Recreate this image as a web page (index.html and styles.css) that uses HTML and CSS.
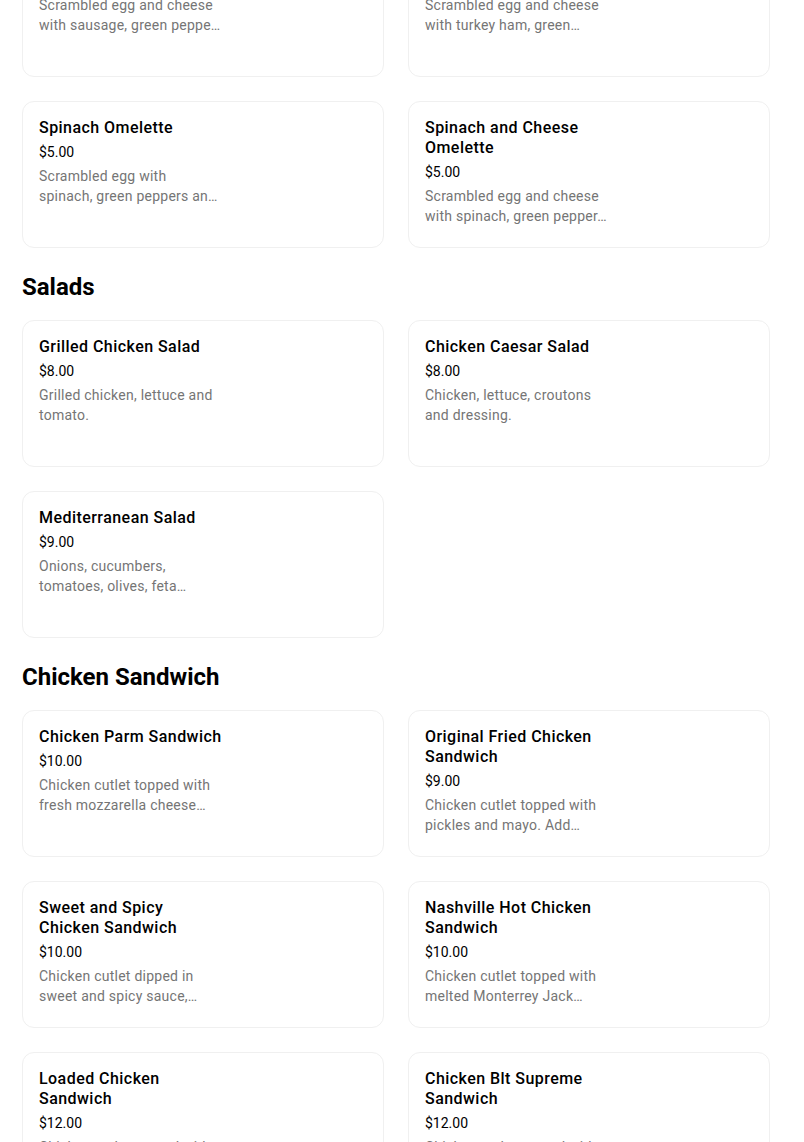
FILE: index.html
```html
<!DOCTYPE html>
<html lang="en">
<head>
  <meta charset="UTF-8" />
  <meta name="viewport" content="width=device-width, initial-scale=1.0"/>
  <title>Menu</title>
  <link rel="stylesheet" href="styles.css">
</head>
<body>

  <main class="menu">

    <section class="menu-section">
      <div class="item-grid">
        <div class="item-card">
          <div class="item-info">
            <h4>Sausage Omelette</h4>
            <p class="price">$5.00</p>
            <p class="desc">Scrambled egg and cheese with sausage, green peppe…</p>
          </div>
        </div>
        <div class="item-card">
          <div class="item-info">
            <h4>Turkey Ham Omelette</h4>
            <p class="price">$5.00</p>
            <p class="desc">Scrambled egg and cheese with turkey ham, green…</p>
          </div>
        </div>
        <div class="item-card">
          <div class="item-info">
            <h4>Spinach Omelette</h4>
            <p class="price">$5.00</p>
            <p class="desc">Scrambled egg with spinach, green peppers an…</p>
          </div>
        </div>
        <div class="item-card">
          <div class="item-info">
            <h4>Spinach and Cheese Omelette</h4>
            <p class="price">$5.00</p>
            <p class="desc">Scrambled egg and cheese with spinach, green pepper…</p>
          </div>
        </div>
      </div>
    </section>

    <section class="menu-section">
      <h2>Salads</h2>
      <div class="item-grid">
        <div class="item-card">
          <div class="item-info">
            <h4>Grilled Chicken Salad</h4>
            <p class="price">$8.00</p>
            <p class="desc">Grilled chicken, lettuce and tomato.</p>
          </div>
        </div>
        <div class="item-card">
          <div class="item-info">
            <h4>Chicken Caesar Salad</h4>
            <p class="price">$8.00</p>
            <p class="desc">Chicken, lettuce, croutons and dressing.</p>
          </div>
        </div>
        <div class="item-card">
          <div class="item-info">
            <h4>Mediterranean Salad</h4>
            <p class="price">$9.00</p>
            <p class="desc">Onions, cucumbers, tomatoes, olives, feta…</p>
          </div>
        </div>
      </div>
    </section>

    <section class="menu-section">
      <h2>Chicken Sandwich</h2>
      <div class="item-grid">
        <div class="item-card">
          <div class="item-info">
            <h4>Chicken Parm Sandwich</h4>
            <p class="price">$10.00</p>
            <p class="desc">Chicken cutlet topped with fresh mozzarella cheese…</p>
          </div>
        </div>
        <div class="item-card">
          <div class="item-info">
            <h4>Original Fried Chicken Sandwich</h4>
            <p class="price">$9.00</p>
            <p class="desc">Chicken cutlet topped with pickles and mayo. Add…</p>
          </div>
        </div>
        <div class="item-card">
          <div class="item-info">
            <h4>Sweet and Spicy Chicken Sandwich</h4>
            <p class="price">$10.00</p>
            <p class="desc">Chicken cutlet dipped in sweet and spicy sauce,…</p>
          </div>
        </div>
        <div class="item-card">
          <div class="item-info">
            <h4>Nashville Hot Chicken Sandwich</h4>
            <p class="price">$10.00</p>
            <p class="desc">Chicken cutlet topped with melted Monterrey Jack…</p>
          </div>
        </div>
        <div class="item-card">
          <div class="item-info">
            <h4>Loaded Chicken Sandwich</h4>
            <p class="price">$12.00</p>
            <p class="desc">Chicken cutlet topped with bacon, egg and…</p>
          </div>
        </div>
        <div class="item-card">
          <div class="item-info">
            <h4>Chicken Blt Supreme Sandwich</h4>
            <p class="price">$12.00</p>
            <p class="desc">Chicken cutlet topped with bacon, lettuce and…</p>
          </div>
        </div>
      </div>
    </section>

  </main>

</body>
</html>
```

FILE: styles.css
```css
* {
  box-sizing: border-box;
}

body {
  margin: 0;
  background: #fff;
  color: #000;
  font-family: Roboto, 'Liberation Sans', sans-serif;
  overflow: hidden;
}

.menu {
  width: 748px;
  margin: -70px 0 0 22px;
}

.menu-section h2 {
  margin: 23px 0 17px;
  font-size: 24px;
  line-height: 32px;
  font-weight: 700;
}

.item-grid {
  display: grid;
  grid-template-columns: 1fr 1fr;
  gap: 24px;
}

.item-card {
  min-height: 147px;
  border: 1px solid #f0f0f0;
  border-radius: 12px;
  padding: 16px;
  background: #fff;
}

.item-info h4 {
  width: 186px;
  margin: 0;
  font-size: 16px;
  line-height: 20px;
  font-weight: 500;
  letter-spacing: 0.45px;
}

.price {
  margin: 4px 0 0;
  font-size: 14px;
  line-height: 20px;
}

.desc {
  width: 184px;
  margin: 4px 0 0;
  font-size: 14px;
  line-height: 20px;
  letter-spacing: 0.25px;
  color: #757575;
}
```
